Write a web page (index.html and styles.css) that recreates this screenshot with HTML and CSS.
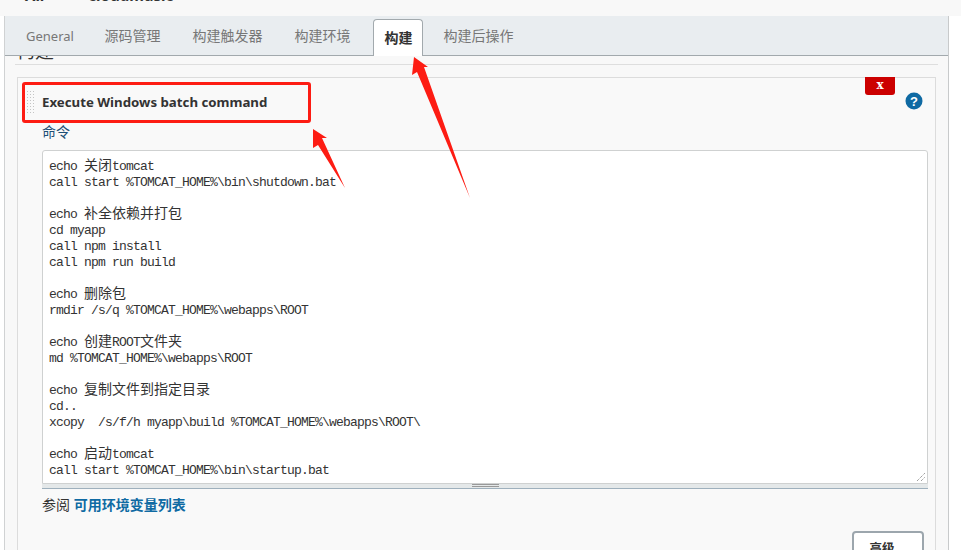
FILE: index.html
```html
<!DOCTYPE html>
<html lang="zh">
<head>
<meta charset="utf-8">
<title>Jenkins</title>
<link rel="stylesheet" href="styles.css">
</head>
<body>
<header class="topbar">
  <span class="crumb crumb-all">All</span>
  <span class="crumb crumb-job">cloudmusic</span>
</header>
<main class="panel">
  <nav class="tabs">
    <a class="tab tab-latin">General</a>
    <a class="tab">源码管理</a>
    <a class="tab">构建触发器</a>
    <a class="tab">构建环境</a>
    <a class="tab tab-active">构建</a>
    <a class="tab">构建后操作</a>
  </nav>
  <section class="section">
    <h2 class="section-title">构建</h2>
    <div class="block">
      <div class="delete-btn">x</div>
      <div class="block-head">
        <span class="grip"></span>
        <span class="block-title">Execute Windows batch command</span>
        <svg class="help" viewBox="0 0 18 18" width="18" height="18"><circle cx="9" cy="9" r="8.5" fill="#0f6aa3"/><text x="9" y="13.6" class="help-mark" text-anchor="middle">?</text></svg>
      </div>
      <div class="block-body">
        <label class="field-label">命令</label>
        <div class="editor">
<pre class="code">echo <span class="cjk">关闭</span>tomcat
call start %TOMCAT_HOME%\bin\shutdown.bat

echo <span class="cjk">补全依赖并打包</span>
cd myapp
call npm install
call npm run build

echo <span class="cjk">删除包</span>
rmdir /s/q %TOMCAT_HOME%\webapps\ROOT

echo <span class="cjk">创建</span>ROOT<span class="cjk">文件夹</span>
md %TOMCAT_HOME%\webapps\ROOT

echo <span class="cjk">复制文件到指定目录</span>
cd..
xcopy  /s/f/h myapp\build %TOMCAT_HOME%\webapps\ROOT\

echo <span class="cjk">启动</span>tomcat
call start %TOMCAT_HOME%\bin\startup.bat</pre>
          <svg class="resize-corner" viewBox="0 0 10 10" width="10" height="10"><path d="M1 9 9 1M5 9 9 5" stroke="#777" stroke-width="1" stroke-dasharray="1 1" fill="none"/></svg>
        </div>
        <div class="grabber"><span class="grabber-mark"></span></div>
        <p class="see-also">参阅 <a class="env-link">可用环境变量列表</a></p>
        <div class="actions"><button class="advanced">高级...</button></div>
      </div>
    </div>
  </section>
</main>
<svg class="annotations" viewBox="0 0 961 550" width="961" height="550">
  <rect x="23.5" y="83.5" width="286" height="38" rx="1.5" fill="none" stroke="#fd1c13" stroke-width="3"/>
  <path d="M313 129 327 138 322 138 345 188 318 145 313 148Z" fill="#fd1c13"/>
  <path d="M414 57 428 67 424 67 470 198 417 72 412 75Z" fill="#fd1c13"/>
</svg>
</body>
</html>
```
FILE: styles.css
```css
* { box-sizing: border-box; }
html, body { margin: 0; padding: 0; }
body {
  width: 961px;
  height: 550px;
  overflow: hidden;
  position: relative;
  background: #fff;
  font-family: "Noto Sans", "Noto Sans CJK SC", sans-serif;
  color: #333;
}
.topbar {
  height: 16px;
  background: #f8f8f8;
  overflow: hidden;
  display: flex;
  align-items: flex-start;
  padding-left: 25px;
  font-size: 15px;
  font-weight: 700;
  color: #333;
  line-height: 16px;
}
.crumb { display: block; margin-top: -13px; }
.crumb-job { margin-left: 44px; }
.panel {
  margin-left: 4px;
  width: 945px;
  height: 534px;
  background: #f8f8f8;
  border-left: 1px solid #d0d2d3;
  border-right: 1px solid #c8cacb;
  overflow: hidden;
}
.tabs {
  position: relative;
  z-index: 1;
  display: flex;
  align-items: flex-end;
  height: 40px;
  background: #e9edf0;
  border-bottom: 1px solid #a2a9ad;
  padding-left: 5px;
}
.tab {
  height: 37px;
  padding: 0 16px;
  font-size: 14px;
  line-height: 36px;
  color: #777;
  white-space: nowrap;
}
.tab-latin { font-size: 13px; padding-right: 14.5px; }
.tab-active {
  position: relative;
  top: 1px;
  padding: 0 10px;
  margin: 0 4px 0 7px;
  background: #fff;
  border: 1px solid #a2a9ad;
  border-bottom: none;
  border-radius: 4px 4px 0 0;
  font-weight: 700;
  color: #333;
  line-height: 35px;
}
.section { padding: 0 10px; }
.section-title {
  margin: -16px 0 0;
  height: 25px;
  padding-left: 1px;
  font-size: 19px;
  line-height: 22px;
  font-weight: 400;
  color: #333;
  border-bottom: 1px solid #dedede;
  white-space: nowrap;
}
.block {
  position: relative;
  margin: 12px 2px 0 2px;
  height: 480px;
  background: #f9f9f9;
  border: 1px solid #dcdcdc;
}
.delete-btn {
  position: absolute;
  top: -1px;
  right: 40px;
  width: 30px;
  height: 18px;
  background: #cc0000;
  border-radius: 0 0 3px 3px;
  color: #fff;
  font-family: "DejaVu Serif", serif;
  font-size: 12px;
  font-weight: 700;
  line-height: 17px;
  text-align: center;
}
.block-head {
  display: flex;
  align-items: center;
  height: 48px;
  padding: 0 12px 0 8px;
}
.grip {
  width: 9px;
  height: 24px;
  margin-right: 7px;
  background-image: radial-gradient(#c4c4c4 0.9px, transparent 1px);
  background-size: 3px 3px;
}
.block-title {
  flex: 1;
  font-size: 13.25px;
  font-weight: 700;
  color: #333;
}
.help { margin-top: -2px; }
.help-mark {
  font-family: "Liberation Sans", sans-serif;
  font-size: 13px;
  font-weight: 700;
  fill: #fff;
}
.block-body { padding: 0 7px 0 24px; }
.field-label {
  display: block;
  height: 24px;
  font-size: 14px;
  line-height: 12px;
  color: #1d4f75;
}
.editor {
  position: relative;
  height: 334px;
  background: #fff;
  border: 1px solid #cfd1d1;
  border-radius: 3px 3px 0 0;
  overflow: hidden;
}
.code {
  margin: 0;
  padding: 8px 6px;
  font-family: "Liberation Mono", "Noto Sans CJK SC", monospace;
  font-size: 13px;
  letter-spacing: -0.8px;
  line-height: 16px;
  color: #333;
}
.cjk {
  font-family: "Noto Sans CJK SC", sans-serif;
  font-size: 14px;
  letter-spacing: 0;
  line-height: 0;
}
.resize-corner { position: absolute; right: 1px; bottom: 1px; }
.grabber {
  display: flex;
  justify-content: center;
  height: 5px;
  background: #e4e8e9;
  border-bottom: 1px solid #9eb0bd;
}
.grabber-mark {
  width: 27px;
  height: 3px;
  border-top: 1px solid #999;
  border-bottom: 1px solid #999;
}
.see-also {
  margin: 8px 0 0;
  font-size: 14px;
  line-height: 16px;
  color: #333;
}
.env-link { color: #0f6aa3; font-weight: 700; }
.actions {
  display: flex;
  justify-content: flex-end;
  margin-top: 18px;
  padding-right: 4px;
}
.advanced {
  width: 72px;
  height: 32px;
  padding: 0;
  background: #fff;
  border: 2px solid #9ca6ad;
  border-radius: 4px;
  font-family: "Noto Sans CJK SC", sans-serif;
  font-size: 12.5px;
  font-weight: 700;
  color: #333;
}
.annotations { position: absolute; left: 0; top: 0; pointer-events: none; }
```
